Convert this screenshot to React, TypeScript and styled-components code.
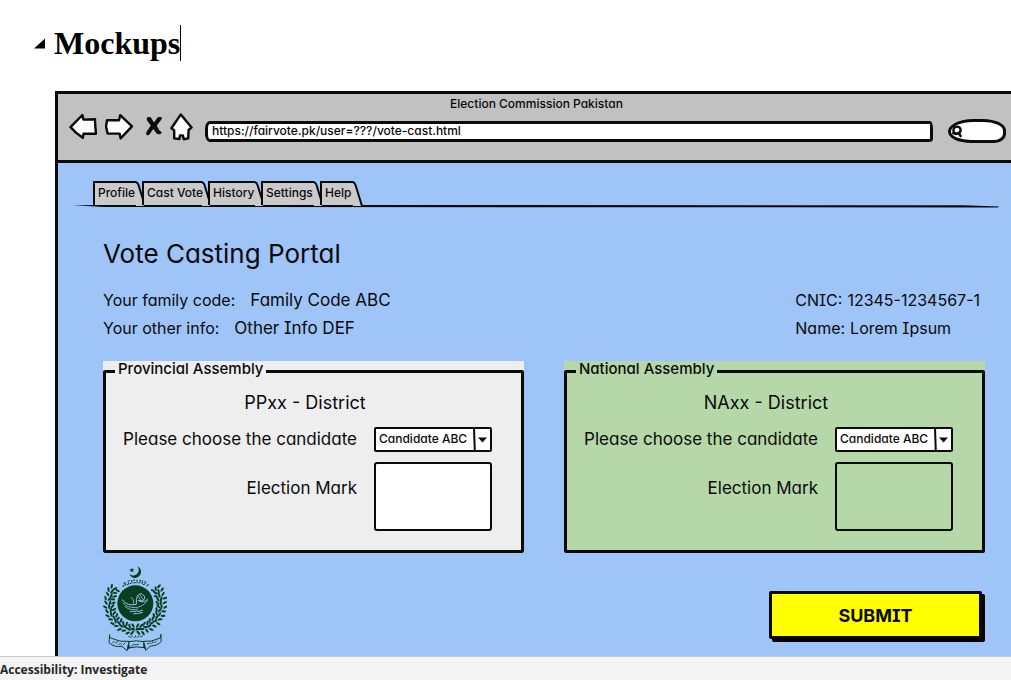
import React, { useState } from "react";
import styled, { createGlobalStyle } from "styled-components";

const INK = "#0a0a0a";
const EMBLEM_GREEN = "#06401f";

const GlobalStyle = createGlobalStyle`
  *, *::before, *::after { box-sizing: border-box; }
  body { margin: 0; background: #fff; }
  button, input, select { font: inherit; color: inherit; }
`;

const Page = styled.div`
  display: flex;
  flex-direction: column;
  height: 100vh;
  overflow: hidden;
`;

const DocumentArea = styled.main`
  flex: 1;
  min-height: 0;
  display: flex;
  flex-direction: column;
  padding-left: 55px;
  overflow: hidden;
`;

const HeadingRow = styled.header`
  flex: none;
  display: flex;
  align-items: center;
  height: 91px;
  padding-bottom: 5px;
  margin-left: -21px;
`;

const CollapseButton = styled.button`
  display: flex;
  padding: 0;
  margin-right: 8px;
  border: 0;
  background: none;
`;

const Heading = styled.h1`
  margin: 0;
  font: 700 32px/36px "Liberation Serif", "Times New Roman", serif;
  color: #000;
  border-right: 1px solid #000;
`;

const Mockup = styled.section`
  flex: 1 0 auto;
  display: flex;
  flex-direction: column;
  border: solid ${INK};
  border-width: 3px 0 0 3px;
  background: #9fc4f8;
  color: ${INK};
  font-family: Inter, "Liberation Sans", sans-serif;
  font-weight: 500;
  font-feature-settings: "cv11", "cv08";
`;

const BrowserBar = styled.div`
  height: 69px;
  background: #c1c1c1;
  border-bottom: 3px solid ${INK};
`;

const BrowserTitle = styled.div`
  padding: 1px 0 0 4px;
  text-align: center;
  font-size: 12px;
  line-height: 18px;
`;

const Toolbar = styled.div`
  display: flex;
  align-items: center;
  height: 28px;
  padding: 0 5px 0 11px;
`;

const NavIcons = styled.div`
  display: flex;
  align-items: center;
  gap: 8px;
  margin-right: 12px;
`;

const IconButton = styled.button`
  display: flex;
  padding: 0;
  border: 0;
  background: none;
`;

const AddressInput = styled.input`
  flex: 1;
  min-width: 0;
  height: 21px;
  margin-top: 8px;
  padding: 0 4px 2px;
  border: 3px solid ${INK};
  border-radius: 5px 3px 4px 5px / 8px 8px 3px 8px;
  background: #fff;
  font-size: 12px;
  line-height: 14px;
  outline: none;
`;

const SearchBox = styled.label`
  display: flex;
  align-items: center;
  width: 58px;
  height: 24px;
  margin: 7px 0 0 15px;
  padding-left: 1px;
  border: 3px solid ${INK};
  border-radius: 26px 24px 12px 24px / 13px 12px 10px 12px;
  background: #fff;
`;

const SearchInput = styled.input`
  flex: 1;
  min-width: 0;
  border: 0;
  padding: 0;
  height: 14px;
  background: transparent;
  outline: none;
  font-size: 12px;
`;

const TabStrip = styled.nav`
  display: flex;
  flex-direction: column;
  margin: 18px 12px 0 15px;
`;

const TabList = styled.div`
  display: flex;
  padding-left: 20px;
`;

const Tab = styled.button<{ $width: number }>`
  position: relative;
  width: ${(p) => p.$width}px;
  height: 24px;
  padding: 0 0 2px 3px;
  border: solid ${INK};
  border-width: 2px 0 0 2px;
  background: #cbcacb;
  background-clip: padding-box;
  font-size: 12px;
  line-height: 18px;
  text-align: left;
  white-space: nowrap;
`;

const TabText = styled.span`
  position: relative;
  z-index: 1;
`;

const TabEdge = styled.svg`
  position: absolute;
  left: 100%;
  top: -2px;
`;

const TabSlot = styled.div`
  display: flex;
  margin-right: 6px;
`;

const TabRule = styled.svg`
  display: block;
  width: 100%;
  height: 3px;
`;

const Content = styled.div`
  padding: 29px 26px 24px 45px;
`;

const PortalTitle = styled.h2`
  margin: 0;
  font-size: 26px;
  font-weight: 400;
  line-height: 34px;
`;

const InfoRow = styled.div`
  display: flex;
  justify-content: space-between;
  margin-top: 15px;
  font-size: 16px;
  font-weight: 400;
  line-height: 28px;
`;

const InfoList = styled.dl<{ $gap: number }>`
  margin: 0;
  padding-right: 5px;
  div { display: flex; gap: ${(p) => p.$gap}px; }
  dt, dd { margin: 0; }
`;

const InfoValue = styled.dd`
  font-size: 17px;
`;

const Panels = styled.div`
  display: grid;
  grid-template-columns: 1fr 1fr;
  gap: 40px;
  margin-top: 19px;
`;

const Panel = styled.div<{ $fill: string }>`
  background: ${(p) => p.$fill};
  min-width: 0;
`;

const Group = styled.fieldset`
  min-width: 0;
  height: 192px;
  margin: 0;
  padding: 8px 29px 0 9px;
  border: 3px solid ${INK};
  border-radius: 2px;
`;

const Legend = styled.legend`
  padding: 0 3px 4px;
  font-size: 15px;
  line-height: 16px;
`;

const District = styled.h3`
  margin: 0 0 11px;
  padding: 1px 0 0 3px;
  text-align: center;
  font-size: 18px;
  font-weight: 400;
  line-height: 26px;
`;

const FormGrid = styled.div`
  display: grid;
  grid-template-columns: 1fr 118px;
  column-gap: 17px;
  row-gap: 10px;
  text-align: right;
  font-size: 17px;
  font-weight: 400;
  line-height: 25px;
  white-space: nowrap;
`;

const MarkLabel = styled.span`
  padding-top: 14px;
`;

const SelectWrap = styled.div`
  position: relative;
  display: flex;
`;

const Select = styled.select`
  appearance: none;
  width: 100%;
  height: 25px;
  padding: 0 16px 2px 3px;
  border: 2px solid ${INK};
  border-radius: 2px;
  background: #fff;
  font-size: 12px;
  font-weight: 500;
  line-height: 18px;
`;

const SelectArrow = styled.svg`
  position: absolute;
  right: 0;
  top: 0;
  pointer-events: none;
`;

const MarkBox = styled.output<{ $fill: string }>`
  height: 69px;
  border: 2px solid ${INK};
  border-radius: 3px;
  background: ${(p) => p.$fill};
`;

const FooterRow = styled.div`
  display: flex;
  justify-content: space-between;
  align-items: flex-start;
  margin-top: 11px;
`;

const SubmitButton = styled.button`
  width: 213px;
  height: 48px;
  margin: 27px 3px 0 0;
  border: 3px solid ${INK};
  border-radius: 2px;
  background: #ffff00;
  box-shadow: 3px 3px 0 #000;
  font-size: 18px;
  font-weight: 700;
`;

const StatusBar = styled.footer`
  flex: none;
  height: 24px;
  padding-top: 3px;
  border-top: 1px solid #c8c8c8;
  background: #f4f4f4;
  color: #262626;
  font: 700 12px/20px "Open Sans", "Noto Sans", sans-serif;
`;

const sketch = {
  fill: "#fff",
  stroke: INK,
  strokeWidth: 2.4,
  strokeLinejoin: "round" as const,
  strokeLinecap: "round" as const,
};

const BackIcon = () => (
  <svg width="28" height="28" viewBox="0 0 28 28" {...sketch}>
    <path d="M1.5 14.2 13.4 2 14.4 6.6 26 6.2 26.2 12 27 20.8 14.6 20.6 13.8 24.8 7 19.6Z" />
  </svg>
);

const ForwardIcon = () => (
  <svg width="28" height="28" viewBox="0 0 28 28" {...sketch}>
    <path d="M2 7.2 14 7.2 15.2 2.2 27 13.4 15.6 25.4 14.6 20.6 2.6 20.6 1 13.6Z" />
  </svg>
);

const StopIcon = () => (
  <svg width="21" height="20" viewBox="-5 1 21 20" fill={INK}>
    <path d="M2 1C3.2.6 4.4 1 5 1.8L8 6.4 11.6 1.6C13 .4 15 .4 15.8 1.4 16 2.4 15.8 3.2 15 4L10.8 9.6 13 14 15.4 16C15.8 17 14.8 18.4 13.4 18.2 12 18.2 11 18 10.2 17L7.2 13 3.8 18C2.8 19.4 1 19.6.4 18.8 0 17.6 0 16.8.8 15.6L4.8 9.6 1 4.4C.4 3 .8 1.6 2 1Z" />
  </svg>
);

const HomeIcon = () => (
  <svg width="23" height="28" viewBox="0 0 23 28" {...sketch}>
    <path d="M10.8 1.4 21.6 14.4 18.6 17 18.2 25.4 13.8 26.2 12.8 22.4 10 22.4 9.4 26 4.2 25.4 4.2 17.4 1.4 15.2Z" />
  </svg>
);

const SearchIcon = () => (
  <svg width="12" height="14" viewBox="1 0 12 14" fill="none" stroke={INK} strokeWidth="2.4" strokeLinecap="round">
    <circle cx="6" cy="6.2" r="3.6" />
    <path d="M7.4 8.8 9.6 12M2.2 9.2 5 10" />
  </svg>
);

/* Leaf pairs along both branches of the wreath */
const leaves: { x: number; y: number; turn: number }[] = [];
for (let i = 0; i < 15; i++) {
  const deg = 84 - i * 8.6;
  const rad = (deg * Math.PI) / 180;
  [-1, 1].forEach((side) => {
    [66, 76, 88].forEach((radius, ring) => {
      const r = radius + (i % 2) * 3;
      leaves.push({
        x: 136 + side * r * Math.cos(rad),
        y: 143 + r * Math.sin(rad),
        turn: side * (deg - 90 + (ring - 1) * 52) + (i % 3) * 14,
      });
    });
  });
}

const Emblem = () => (
  <svg width="64" height="87" viewBox="39 24 192 261" role="img" aria-label="Election Commission emblem">
    <g fill={EMBLEM_GREEN}>
      <path d="M142 31A18 18 0 1 1 118 53A16 16 0 1 0 142 31Z" />
      <path d="m126 35 2 5 5 0-4 4 1 5-5-3-4 3 1-5-4-4 6 0Z" />
      <circle cx="136" cy="142" r="54" />
      {leaves.map((l, i) => (
        <ellipse key={i} cx={l.x} cy={l.y} rx="7.5" ry="3.2" transform={`rotate(${l.turn} ${l.x} ${l.y})`} />
      ))}
    </g>
    <g fill="none" stroke={EMBLEM_GREEN} strokeWidth="3" strokeLinecap="round">
      <path d="M98 91q5 2 5-4M107 87l-2-7M112 86q5 2 4-5M120 82q4 3 6-2l-1-6M131 81q4 2 6-2M141 80l0-8M146 81q5 1 5-4M156 83l2-8M160 86q6 1 6-5M170 90q5 0 5-5" />
      <path d="M101 82l3-3M114 76l4-2M129 73l5-1M149 73l4 1M164 77l4 2" />
      <path d="M68 181q24 37 68 43q44-6 68-43" strokeWidth="2" />
    </g>
    <g fill="none" stroke="#9fc4f8" strokeWidth="3" strokeLinecap="round" strokeLinejoin="round">
      <path d="M97 132q16 20 42 13q-2-32 15-32q15 8 8 18q-7 7-18 2q18 11 29-4" />
      <path d="M99 141q14 17 44 13q16-2 30-20M105 152q18 14 38 7M124 124q8 5 7 18M144 119l10 17M151 118l9 13" strokeWidth="2.4" />
      <path d="M120 166q6 4 10-1q5 4 10 0q7 3 17-2M131 173l10 0M145 172l12-2" strokeWidth="3" />
    </g>
    <g fill="#9fc4f8" stroke={EMBLEM_GREEN} strokeWidth="3" strokeLinejoin="round">
      <path d="M59 236q-3 6 3 10q29 14 56 10l-7 28-15-13q-22 4-39-11Z" />
      <path d="M212 235q4 7-2 11q-25 13-50 10l8 27 13-13q21 0 33-14Z" />
      <path d="M117 257q22-5 44 0l1 18q-22-5-47 1Z" />
    </g>
    <g fill={EMBLEM_GREEN}>
      <path d="m114 262-3 22 10-10Z" />
      <path d="m163 262 5 21-9-9Z" />
    </g>
    <g fill="none" stroke={EMBLEM_GREEN} strokeWidth="2.4" strokeLinecap="round">
      <path d="M116 242q8 5 12-1M132 245q5 1 5-6M141 244q6 0 6-5M151 242l7-2M122 236l3 1M145 233l2 0" />
      <path d="M68 259q5-4 7-1M79 262l4-7M86 265q5-4 9-1M99 267l6-6M124 270q5 0 7-5q6 4 15 0M172 263q5 2 9-2M186 262l2-7M192 260q5 0 8-5" />
    </g>
  </svg>
);

const TABS = [
  { label: "Profile", width: 43 },
  { label: "Cast Vote", width: 60 },
  { label: "History", width: 47 },
  { label: "Settings", width: 53 },
  { label: "Help", width: 33 },
];

function AssemblyPanel(props: { id: string; name: string; district: string; fill: string; markFill: string }) {
  const [candidate, setCandidate] = useState("Candidate ABC");
  return (
    <Panel $fill={props.fill}>
      <Group>
        <Legend>{props.name}</Legend>
        <District>{props.district}</District>
        <FormGrid>
          <label htmlFor={props.id}>Please choose the candidate</label>
          <SelectWrap>
            <Select id={props.id} value={candidate} onChange={(e) => setCandidate(e.target.value)}>
              <option>Candidate ABC</option>
            </Select>
            <SelectArrow width="19" height="25" viewBox="0 0 19 25">
              <path d="M1 1 1.8 24" stroke={INK} strokeWidth="2" />
              <path d="M5 10.5h9l-4.5 5Z" fill={INK} />
            </SelectArrow>
          </SelectWrap>
          <MarkLabel id={`${props.id}-mark`}>Election Mark</MarkLabel>
          <MarkBox $fill={props.markFill} aria-labelledby={`${props.id}-mark`} />
        </FormGrid>
      </Group>
    </Panel>
  );
}

export default function App() {
  const [url, setUrl] = useState("https://fairvote.pk/user=???/vote-cast.html");
  return (
    <Page>
      <GlobalStyle />
      <DocumentArea>
        <HeadingRow>
          <CollapseButton aria-label="Collapse heading">
            <svg width="12" height="11" viewBox="0 0 12 11">
              <path d="M11 0.5V10.5H0Z" fill="#000" />
            </svg>
          </CollapseButton>
          <Heading>Mockups</Heading>
        </HeadingRow>
        <Mockup>
          <BrowserBar>
            <BrowserTitle>Election Commission Pakistan</BrowserTitle>
            <Toolbar>
              <NavIcons>
                <IconButton aria-label="Back"><BackIcon /></IconButton>
                <IconButton aria-label="Forward"><ForwardIcon /></IconButton>
                <IconButton aria-label="Stop"><StopIcon /></IconButton>
                <IconButton aria-label="Home"><HomeIcon /></IconButton>
              </NavIcons>
              <AddressInput aria-label="Address" value={url} onChange={(e) => setUrl(e.target.value)} />
              <SearchBox>
                <SearchIcon />
                <SearchInput aria-label="Search" />
              </SearchBox>
            </Toolbar>
          </BrowserBar>
          <TabStrip>
            <TabList>
              {TABS.map((t) => (
                <TabSlot key={t.label}>
                  <Tab $width={t.width}>
                    <TabText>{t.label}</TabText>
                    <TabEdge width="10" height="25" viewBox="0 0 10 25">
                      <path d="M-1 1Q1.5 1 2.5 4L9 25H-1Z" fill="#cbcacb" />
                      <path d="M-1 1Q1.5 1 2.5 4L9 25" fill="none" stroke={INK} strokeWidth="2" />
                    </TabEdge>
                  </Tab>
                </TabSlot>
              ))}
            </TabList>
            <TabRule viewBox="0 0 926 3" preserveAspectRatio="none">
              <path d="M0 0.2 30 0 890 0.2 926 1.4 925 2.4 30 2Z" fill={INK} />
            </TabRule>
          </TabStrip>
          <Content>
            <PortalTitle>Vote Casting Portal</PortalTitle>
            <InfoRow>
              <InfoList $gap={15}>
                <div><dt>Your family code:</dt><InfoValue>Family Code ABC</InfoValue></div>
                <div><dt>Your other info:</dt><InfoValue>Other Info DEF</InfoValue></div>
              </InfoList>
              <InfoList $gap={5}>
                <div><dt>CNIC:</dt><dd>12345-1234567-1</dd></div>
                <div><dt>Name:</dt><dd>Lorem Ipsum</dd></div>
              </InfoList>
            </InfoRow>
            <Panels>
              <AssemblyPanel id="provincial" name="Provincial Assembly" district="PPxx - District" fill="#eeeeee" markFill="#fff" />
              <AssemblyPanel id="national" name="National Assembly" district="NAxx - District" fill="#b6d7a8" markFill="transparent" />
            </Panels>
            <FooterRow>
              <Emblem />
              <SubmitButton>SUBMIT</SubmitButton>
            </FooterRow>
          </Content>
        </Mockup>
      </DocumentArea>
      <StatusBar>Accessibility: Investigate</StatusBar>
    </Page>
  );
}
